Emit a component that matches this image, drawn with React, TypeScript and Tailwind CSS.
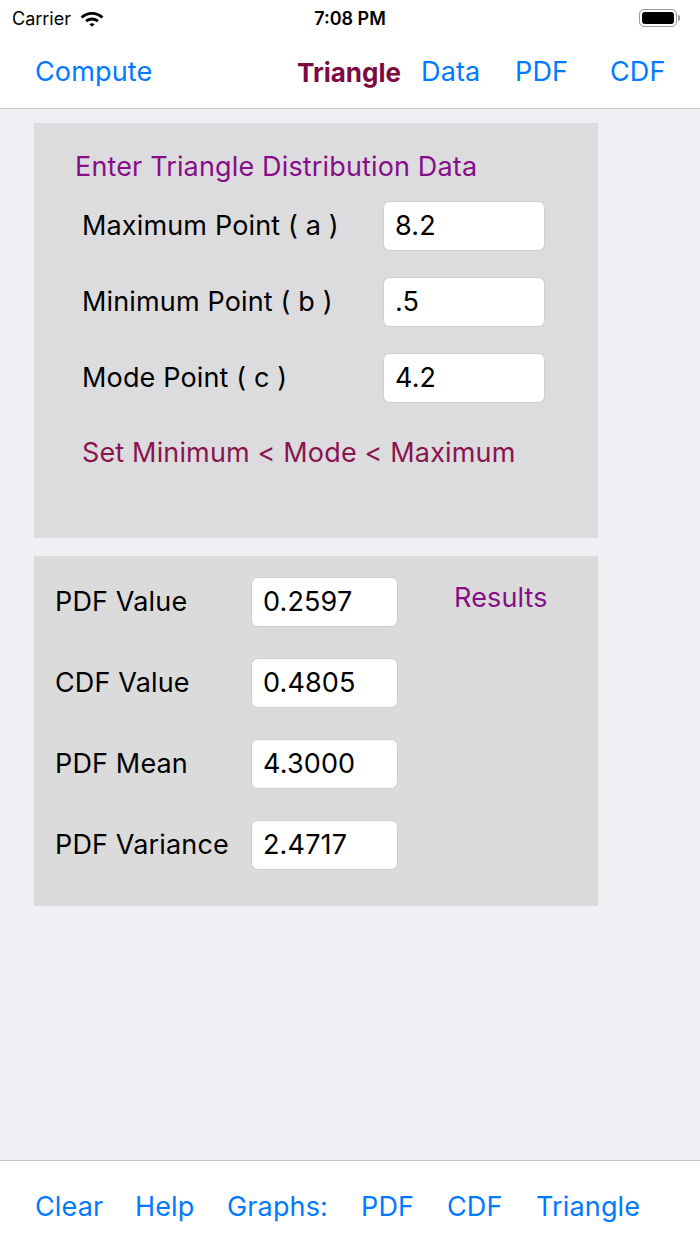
import React from "react";

const font = { fontFamily: "Inter, Roboto, 'Liberation Sans', sans-serif" };

function Wifi() {
  return (
    <svg width="26" height="19" viewBox="0 0 26 19" className="ml-[8px]">
      <path d="M13 3C8.6 3 4.6 4.7 1.6 7.5L3.6 9.5C6.1 7.2 9.4 5.8 13 5.8S19.9 7.2 22.4 9.5L24.4 7.5C21.4 4.7 17.4 3 13 3Z" fill="#000" />
      <path d="M13 8.6C10.4 8.6 8 9.6 6.2 11.3L8.2 13.3C9.5 12.1 11.2 11.4 13 11.4S16.5 12.1 17.8 13.3L19.8 11.3C18 9.6 15.6 8.6 13 8.6Z" fill="#000" />
      <path d="M13 14.2C12 14.2 11.1 14.6 10.4 15.2L13 17.8L15.6 15.2C14.9 14.6 14 14.2 13 14.2Z" fill="#000" />
    </svg>
  );
}

function Battery() {
  return (
    <div className="flex items-center">
      <div className="w-[38px] h-[18px] rounded-[5px] border border-[#9a9a9a] p-[2px]">
        <div className="w-full h-full rounded-[3px] bg-black" />
      </div>
      <div className="w-[2px] h-[6px] rounded-r-sm bg-[#9a9a9a] ml-[1px]" />
    </div>
  );
}

function Field({ value, width }: { value: string; width: string }) {
  return (
    <div className={`${width} h-[50px] bg-white rounded-[7px] border border-[#cfcfcf] flex items-center px-[11px] text-[27px] tracking-[0.15px] text-black`}>
      {value}
    </div>
  );
}

const inputs = [
  { label: "Maximum Point ( a )", value: "8.2" },
  { label: "Minimum Point ( b )", value: ".5" },
  { label: "Mode Point ( c )", value: "4.2" },
];

const results = [
  { label: "PDF Value", value: "0.2597" },
  { label: "CDF Value", value: "0.4805" },
  { label: "PDF Mean", value: "4.3000" },
  { label: "PDF Variance", value: "2.4717" },
];

export default function App() {
  return (
    <div className="w-[700px] h-[1244px] flex flex-col bg-[#efeff4] tracking-[0.15px]" style={font}>
      {/* status + nav */}
      <div className="bg-white border-b border-[#c6c6c8]">
        <div className="h-[36px] flex items-center px-[12px] relative">
          <div className="flex items-center text-[18px] tracking-normal text-black">
            Carrier
            <Wifi />
          </div>
          <div className="absolute left-0 right-0 text-center text-[18px] font-semibold tracking-normal text-black pointer-events-none">
            7:08 PM
          </div>
          <div className="ml-auto mr-[8px]">
            <Battery />
          </div>
        </div>
        <div className="h-[72px] flex items-center pl-[35px] text-[27px] text-[#007aff]">
          <div className="w-[262px]">Compute</div>
          <div className="w-[124px] font-bold tracking-normal text-[26px] text-[#7e0a43]">Triangle</div>
          <div className="w-[94px]">Data</div>
          <div className="w-[95px]">PDF</div>
          <div>CDF</div>
        </div>
      </div>

      {/* content */}
      <div className="flex-1 pl-[34px] pt-[14px] flex flex-col gap-[18px]">
        <div className="w-[564px] h-[415px] bg-[#dcdcde] pt-[29px]">
          <div className="pl-[41px] h-[30px] flex items-center text-[27px] text-[#870e87]">
            Enter Triangle Distribution Data
          </div>
          <div className="mt-[19px] flex flex-col gap-[26px] pl-[48px]">
            {inputs.map((r) => (
              <div key={r.label} className="flex items-center h-[50px]">
                <div className="w-[301px] text-[27px] text-black">{r.label}</div>
                <Field value={r.value} width="w-[162px]" />
              </div>
            ))}
          </div>
          <div className="mt-[35px] pl-[48px] h-[30px] flex items-center text-[27px] text-[#8a1450]">
            Set Minimum &lt; Mode &lt; Maximum
          </div>
        </div>

        <div className="w-[564px] h-[350px] bg-[#dbdbdb] pt-[21px] pl-[21px] flex flex-col gap-[31px]">
          {results.map((r, i) => (
            <div key={r.label} className="flex items-center h-[50px]">
              <div className="w-[196px] text-[27px] text-black">{r.label}</div>
              <Field value={r.value} width="w-[147px]" />
              {i === 0 && (
                <div className="ml-[56px] -mt-[7px] text-[27px] text-[#870e87]">Results</div>
              )}
            </div>
          ))}
        </div>
      </div>

      {/* toolbar */}
      <div className="h-[84px] bg-white border-t border-[#c6c6c8] flex items-center pl-[35px] pt-[9px] text-[27px] text-[#007aff]">
        <div className="w-[100px]">Clear</div>
        <div className="w-[92px]">Help</div>
        <div className="w-[134px]">Graphs:</div>
        <div className="w-[86px]">PDF</div>
        <div className="w-[89px]">CDF</div>
        <div>Triangle</div>
      </div>
    </div>
  );
}
